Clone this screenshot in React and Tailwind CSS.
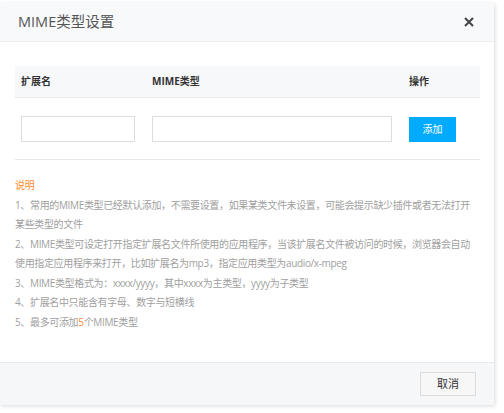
export default function App() {
  const lines = [
    "1、常用的MIME类型已经默认添加，不需要设置，如果某类文件未设置，可能会提示缺少插件或者无法打开",
    "某些类型的文件",
    "2、MIME类型可设定打开指定扩展名文件所使用的应用程序，当该扩展名文件被访问的时候，浏览器会自动",
    "使用指定应用程序来打开，比如扩展名为mp3，指定应用类型为audio/x-mpeg",
    "3、MIME类型格式为：xxxx/yyyy，其中xxxx为主类型，yyyy为子类型",
    "4、扩展名中只能含有字母、数字与短横线",
  ];

  return (
    <div
      className="w-[504px] h-[413px] bg-white pt-[3px] overflow-hidden"
      style={{ fontFamily: '"Open Sans", "Noto Sans CJK SC", sans-serif' }}
    >
      <div className="w-[494px] h-[402px] bg-white flex flex-col shadow-[1px_1px_4px_rgba(0,0,0,0.15)]">
        <div className="h-[39px] bg-[#f8f9fb] border-b border-[#eceef1] flex items-center justify-between pl-[18px] pr-[20px]">
          <span className="text-[14.5px] text-[#555]">MIME类型设置</span>
          <svg width="10" height="10" viewBox="0 0 10 10">
            <path d="M1 1L9 9M9 1L1 9" stroke="#444" strokeWidth="2" />
          </svg>
        </div>

        <div className="flex-1 px-[15px] pt-[24px]">
          <div className="w-[465px] h-[32px] bg-[#f7f8fa] border-b border-[#e8eaed] flex items-center text-[10px] font-bold text-[#333]">
            <div className="w-[137px] pl-[6px]">扩展名</div>
            <div className="w-[257px]">MIME类型</div>
            <div>操作</div>
          </div>

          <div className="flex items-center mt-[18px] h-[26px]">
            <input className="ml-[6px] w-[114px] h-[26px] border border-[#ddd] outline-none" />
            <input className="ml-[17px] w-[240px] h-[26px] border border-[#ddd] outline-none" />
            <button className="ml-[17px] w-[47px] h-[25px] bg-[#00aaff] text-white text-[10px]">
              添加
            </button>
          </div>

          <div className="w-[465px] border-b border-[#e8e8e8] mt-[17px]" />

          <div className="mt-[16px] text-[10px] leading-[19.5px] text-[#a0a0a0] tracking-[-0.35px] whitespace-nowrap">
            <div className="text-[#ff8a1f]">说明</div>
            {lines.map((n) => (
              <div key={n}>{n}</div>
            ))}
            <div>
              5、最多可添加<span className="text-[#ff8a1f]">5</span>个MIME类型
            </div>
          </div>
        </div>

        <div className="h-[43px] bg-[#f6f7f9] border-t border-[#e8eaed] flex items-center justify-end pr-[18px]">
          <button className="w-[56px] h-[24px] bg-[#f7f7f7] border border-[#dcdcdc] text-[11px] text-[#333]">
            取消
          </button>
        </div>
      </div>
    </div>
  );
}
